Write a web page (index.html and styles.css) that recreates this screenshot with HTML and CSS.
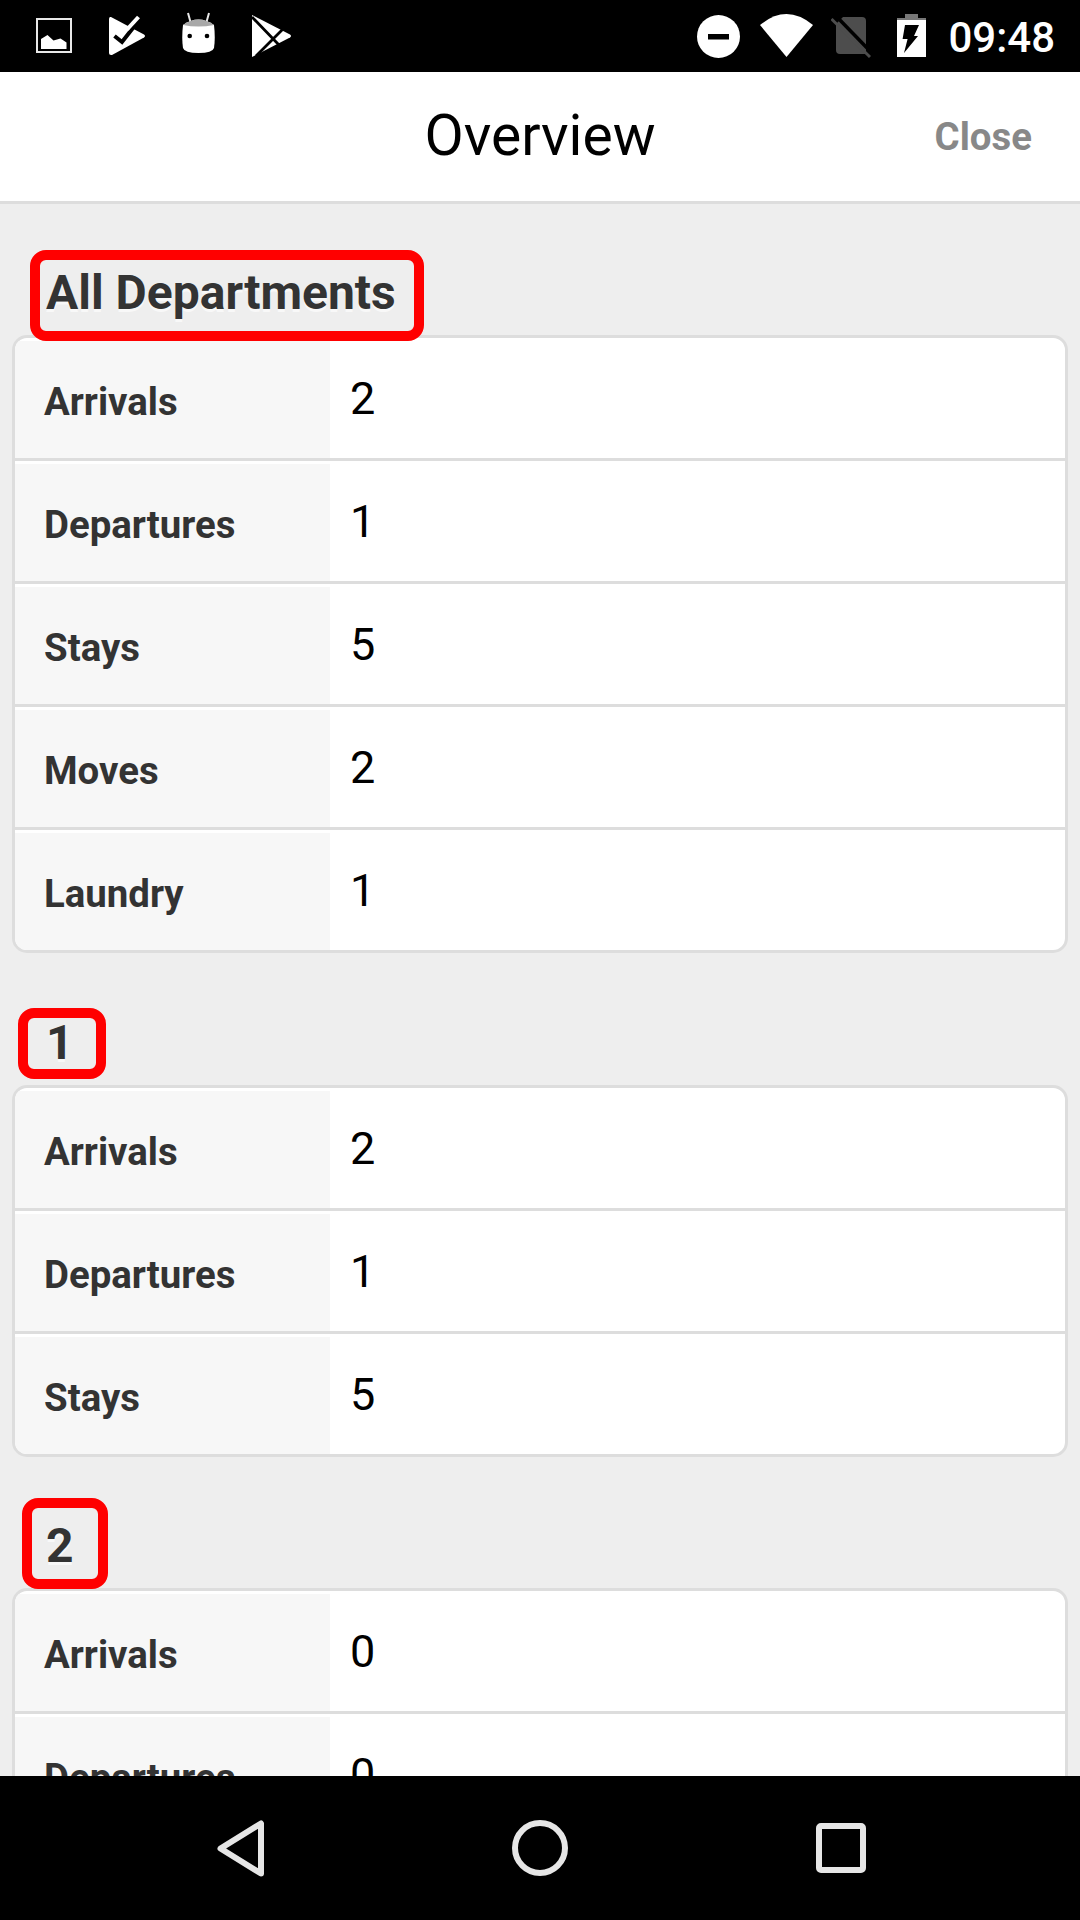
FILE: index.html
```html
<!DOCTYPE html>
<html lang="en">
<head>
<meta charset="utf-8">
<title>Overview</title>
<link rel="stylesheet" href="styles.css">
</head>
<body>
<div class="screen">
  <div class="statusbar">
    <div class="status-left">
      <svg width="36" height="72" viewBox="0 0 36 72"><rect x="1" y="19" width="34" height="33" fill="none" stroke="#e8e8e8" stroke-width="2"/><path d="M5 39 L11.5 35 L17.5 40.5 L24.5 38.5 L30.5 42.5 V49 H5 Z" fill="#fff"/></svg>
      <svg width="36" height="72" viewBox="0 0 36 72"><path d="M2 17 L35 34.5 Q37 36 35 37.500 L3 55 Q0 55.500 0 53 V19 Q0 16.500 2 17 Z" fill="#fff"/><path d="M5.5 36 L13 42 L31 19" fill="none" stroke="#000" stroke-width="4"/><path d="M18 29.500 L29.500 17" fill="none" stroke="#fff" stroke-width="4"/></svg>
      <svg width="33" height="72" viewBox="0 0 33 72"><path d="M6 13 L8.5 22 M27 13 L24.500 22" stroke="#e8e8e8" stroke-width="2" fill="none"/><path d="M1 25 Q16.500 14 32 25 Q33.500 38 32 48 Q30.500 53 16.500 53 Q2.500 53 1 48 Q-.5 38 1 25 Z" fill="#fff"/><path d="M1 25 Q16.500 14 32 25 Q16.500 28 1 25 Z" fill="#a8a8a8"/><circle cx="7.700" cy="36" r="2.300" fill="#000"/><circle cx="25" cy="36" r="2.300" fill="#000"/></svg>
      <svg width="39" height="72" viewBox="0 0 39 72"><path d="M0 15 L38 34.500 Q40 36 38 37.500 L0 57 Z" fill="#fff"/><path d="M0 17 L27 45 M4 56 L31 29" stroke="#000" stroke-width="2.800" fill="none"/></svg>
    </div>
    <div class="status-right">
      <svg class="ic-dnd" width="43" height="72" viewBox="0 0 43 72"><circle cx="21.500" cy="36.500" r="21.500" fill="#fff"/><rect x="11" y="34" width="21" height="5.500" fill="#000"/></svg>
      <svg class="ic-wifi" width="53" height="72" viewBox="0 0 53 72"><path d="M0 25 Q26.500 3 53 25 L26.500 57 Z" fill="#fff"/></svg>
      <svg class="ic-sim" width="40" height="72" viewBox="0 0 40 72"><path d="M12 17 H31 Q35 17 35 21 V54 H9 Q5 54 5 50 V24 Z" fill="#4d4d4d"/><path d="M5 16 L38 50" stroke="#000" stroke-width="3.500" fill="none"/><path d="M0.500 19 L39 57" stroke="#4d4d4d" stroke-width="3" fill="none"/></svg>
      <svg class="ic-bat" width="29" height="72" viewBox="0 0 29 72"><path d="M8 14 H21 V18 H29 V57 H0 V18 H8 Z" fill="#fff"/><path d="M8 14 H21 V18 H29 V20 H0 V18 H8 Z" fill="#777"/><path d="M8 25 H22 L17 36 H21 L7 53 L10.600 39 H5.600 Z" fill="#000"/></svg>
      <span class="clock">09:48</span>
    </div>
  </div>

  <header class="appbar">
    <h1 class="appbar-title">Overview</h1>
    <a class="appbar-close">Close</a>
  </header>

  <main class="content">
    <section class="section">
      <h2 class="section-title">All Departments<span class="mark mark-all"></span></h2>
      <div class="card">
        <div class="row"><div class="label">Arrivals</div><div class="value">2</div></div>
        <div class="row"><div class="label">Departures</div><div class="value">1</div></div>
        <div class="row"><div class="label">Stays</div><div class="value">5</div></div>
        <div class="row"><div class="label">Moves</div><div class="value">2</div></div>
        <div class="row"><div class="label">Laundry</div><div class="value">1</div></div>
      </div>
    </section>
    <section class="section">
      <h2 class="section-title">1<span class="mark mark-one"></span></h2>
      <div class="card">
        <div class="row"><div class="label">Arrivals</div><div class="value">2</div></div>
        <div class="row"><div class="label">Departures</div><div class="value">1</div></div>
        <div class="row"><div class="label">Stays</div><div class="value">5</div></div>
      </div>
    </section>
    <section class="section">
      <h2 class="section-title">2<span class="mark mark-two"></span></h2>
      <div class="card">
        <div class="row"><div class="label">Arrivals</div><div class="value">0</div></div>
        <div class="row"><div class="label">Departures</div><div class="value">0</div></div>
      </div>
    </section>
  </main>

  <nav class="navbar">
    <svg width="47" height="144" viewBox="0 0 47 144"><path d="M44 47.500 V97.500 L3.500 72.500 Z" class="nav-shape nav-back"/></svg>
    <svg width="56" height="144" viewBox="0 0 56 144"><circle cx="28" cy="72" r="25" class="nav-shape"/></svg>
    <svg width="50" height="144" viewBox="0 0 50 144"><rect x="3" y="50" width="44" height="44" rx="2" class="nav-shape"/></svg>
  </nav>
</div>
</body>
</html>
```
FILE: styles.css
```css
* { box-sizing: border-box; }
html, body { margin: 0; padding: 0; background: #000; }
body { font-family: Roboto, "Liberation Sans", sans-serif; }

.screen {
  width: 1080px;
  height: 1920px;
  display: flex;
  flex-direction: column;
  overflow: hidden;
  background: #eee;
}

.statusbar {
  flex: none;
  height: 72px;
  background: #000;
  display: flex;
  justify-content: space-between;
  padding: 0 25px 0 36px;
}
.status-left { display: flex; gap: 37px; }
.status-right { display: flex; }
.statusbar svg { display: block; }
.ic-wifi { margin-left: 20px; }
.ic-sim { margin-left: 18px; }
.ic-bat { margin-left: 26px; }
.clock {
  margin-left: 22px;
  color: #fff;
  font-size: 42px;
  font-weight: 500;
  line-height: 75px;
}

.appbar {
  flex: none;
  height: 132px;
  padding-bottom: 3px;
  background: #fff;
  border-bottom: 3px solid #ddd;
  display: flex;
  align-items: center;
  justify-content: center;
  position: relative;
}
.appbar-title {
  margin: 0;
  font-size: 57px;
  font-weight: 400;
  color: #000;
}
.appbar-close {
  position: absolute;
  right: 48px;
  top: 29px;
  font-size: 38.4px;
  font-weight: 700;
  line-height: 72px;
  color: #888;
}

.content {
  flex: 1;
  min-height: 0;
  overflow: hidden;
}
.section-title {
  position: relative;
  margin: 0;
  height: 131.33px;
  padding: 0 0 14px 46px;
  font-size: 48px;
  font-weight: 700;
  line-height: 56px;
  color: #333;
  text-shadow: 0 3px 0 #f8f8f8;
  display: flex;
  align-items: flex-end;
}
.mark {
  position: absolute;
  border: 10px solid #f00;
  border-radius: 16px;
}
.mark-all { left: 30px; top: 46px; width: 394px; height: 91px; }
.mark-one { left: 18px; top: 55px; width: 88px; height: 71px; }
.mark-two { left: 22px; top: 41px; width: 86px; height: 91px; }

.card {
  margin: 0 12px;
  border: 3px solid #ddd;
  border-radius: 15px;
  background: #fff;
  overflow: hidden;
}
.row {
  display: flex;
  padding-top: 3px;
  border-bottom: 3px solid #ddd;
}
.row:last-child { border-bottom: 0; }
.label {
  flex: none;
  width: 315px;
  height: 117px;
  padding-left: 29px;
  background: #f7f7f7;
  font-size: 38.4px;
  font-weight: 700;
  line-height: 122px;
  color: #333;
}
.value {
  padding-left: 20px;
  font-size: 45px;
  line-height: 115px;
  color: #000;
}

.navbar {
  flex: none;
  height: 144px;
  background: #000;
  display: flex;
  justify-content: center;
  gap: 248px;
  padding-left: 2px;
}
.navbar svg { display: block; }
.nav-shape {
  fill: none;
  stroke: #e6e6e6;
  stroke-width: 6;
}
.nav-back { stroke-linejoin: round; }
```
